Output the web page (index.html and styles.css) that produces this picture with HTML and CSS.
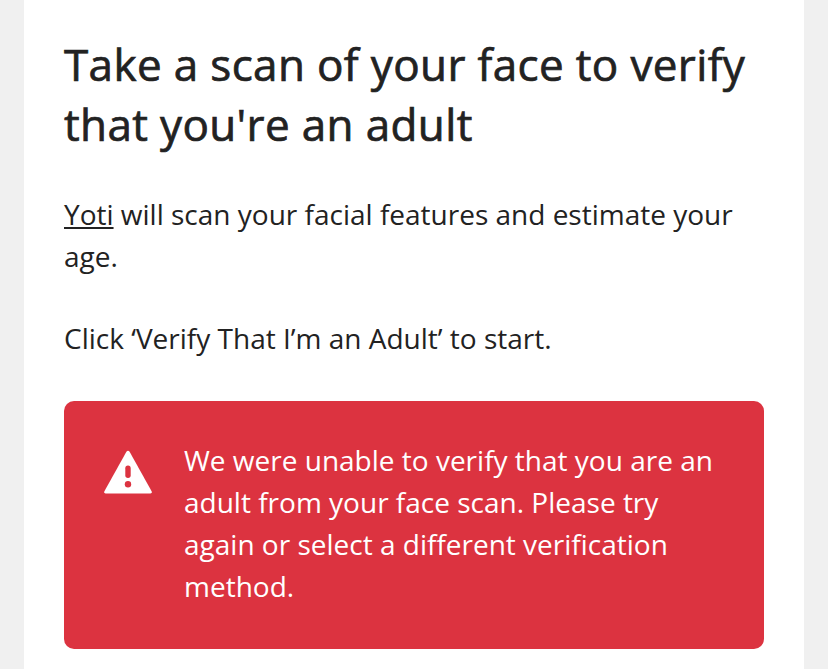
FILE: index.html
```html
<!DOCTYPE html>
<html lang="en">
    <head>
        <meta charset="utf-8">
        <title>Verify your age</title>
        <meta name="viewport" content="width=device-width, initial-scale=1">
        <link rel="stylesheet" href="styles.css">
    </head>

    <body>
        <main class="panel">
            <h1>Take a scan of your face to verify that you're an adult</h1>
            <p><a class="yoti" href="#">Yoti</a> will scan your facial features and estimate your age.</p>
            <p>Click ‘Verify That I’m an Adult’ to start.</p>

            <div class="alert" role="alert">
                <svg class="alert-icon" viewBox="0 0 48 44" aria-hidden="true">
                    <path fill="#fff" d="M22.4 1.8Q24 -.2 25.6 1.8L47.6 41.2Q48.6 43.4 46.4 43.4H1.6Q-.6 43.4 .4 41.2Z"/>
                    <path fill="none" stroke="#dc3340" stroke-width="5.4" stroke-linecap="round" d="M24 18.2V25.2"/>
                    <circle cx="24" cy="34.3" r="3.2" fill="#dc3340"/>
                </svg>
                <p class="alert-text">We were unable to verify that you are an adult from your face scan. Please try again or select a different verification method.</p>
            </div>
        </main>
    </body>
</html>
```

FILE: styles.css
```css
* {
    box-sizing: border-box;
}
body {
    margin: 0;
    padding: 0 24px;
    background-color: #f0f0f0;
    color: #222;
    font-family: "Open Sans", sans-serif;
    font-size: 28px;
    line-height: 42px;
    overflow: hidden;
}
.panel {
    min-height: 669px;
    padding: 34px 40px 20px;
    background-color: #fff;
}
h1 {
    margin: 0 0 39px;
    font-size: 44px;
    font-weight: 500;
    line-height: 60px;
    letter-spacing: 0.36px;
    -webkit-text-stroke: 0.7px #222;
}
p {
    margin: 0 0 40px;
}
.yoti {
    color: inherit;
    text-underline-offset: 2px;
    text-decoration-thickness: 2px;
}
.alert {
    display: flex;
    gap: 32px;
    height: 248px;
    margin-top: 42px;
    padding: 38px 40px;
    border-radius: 10px;
    background-color: #dc3340;
    color: #fff;
}
.alert-icon {
    flex: none;
    width: 48px;
    height: 44px;
    margin-top: 11px;
}
.alert-text {
    margin: 0;
}
```
